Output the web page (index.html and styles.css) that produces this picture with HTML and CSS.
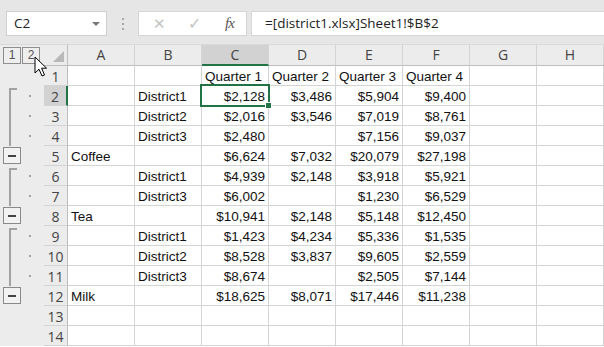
FILE: index.html
```html
<!DOCTYPE html>
<html lang="en">
<head>
  <meta charset="UTF-8" />
  <title>Outline - Excel</title>
  <link rel="stylesheet" href="styles.css">
</head>
<body>
  <div class="topbar">
    <div class="namebox">C2<span class="caret"></span></div>
    <div class="grip"><i></i><i></i><i></i></div>
    <div class="fbuttons">
      <span class="fb-x">&#x2715;</span>
      <span class="fb-ok">&#x2713;</span>
      <span class="fb-fx">fx</span>
    </div>
    <div class="formula">=[district1.xlsx]Sheet1!$B$2</div>
  </div>

  <div class="sheet">
    <div class="outline" id="outline">
      <div class="levels">
        <span class="lvl">1</span><span class="lvl">2</span>
      </div>
      <div class="ol-row"></div>
    </div>
    <div class="grid" id="grid"></div>
  </div>

  <svg class="cursor" width="14" height="22" viewBox="0 0 14 22">
    <path d="M1 1 L1 17 L5 13.2 L8 20 L10.5 19 L7.6 12.2 L12.6 12.2 Z" fill="#fff" stroke="#000" stroke-width="1" stroke-linejoin="round"/>
  </svg>

  <script>
    const cols = ["A", "B", "C", "D", "E", "F", "G", "H"];
    const rows = [
      ["", "", "Quarter 1", "Quarter 2", "Quarter 3", "Quarter 4"],
      ["", "District1", "$2,128", "$3,486", "$5,904", "$9,400"],
      ["", "District2", "$2,016", "$3,546", "$7,019", "$8,761"],
      ["", "District3", "$2,480", "", "$7,156", "$9,037"],
      ["Coffee", "", "$6,624", "$7,032", "$20,079", "$27,198"],
      ["", "District1", "$4,939", "$2,148", "$3,918", "$5,921"],
      ["", "District3", "$6,002", "", "$1,230", "$6,529"],
      ["Tea", "", "$10,941", "$2,148", "$5,148", "$12,450"],
      ["", "District1", "$1,423", "$4,234", "$5,336", "$1,535"],
      ["", "District2", "$8,528", "$3,837", "$9,605", "$2,559"],
      ["", "District3", "$8,674", "", "$2,505", "$7,144"],
      ["Milk", "", "$18,625", "$8,071", "$17,446", "$11,238"],
      [],
      []
    ];
    // detail rows per group, each group closed by a summary row with a minus button
    const groups = [3, 2, 3];

    const grid = document.getElementById("grid");
    const outline = document.getElementById("outline");

    function cell(cls, text) {
      const el = document.createElement("div");
      el.className = cls;
      el.textContent = text || "";
      grid.appendChild(el);
      return el;
    }

    cell("corner");
    cols.forEach(c => cell(c === "C" ? "colhead sel" : "colhead", c));

    rows.forEach((row, r) => {
      cell(r === 1 ? "rowhead sel" : "rowhead", r + 1);
      cols.forEach((c, i) => {
        const v = row[i] || "";
        const num = v.startsWith("$");
        const el = cell(num ? "c num" : "c", v);
        if (r === 1 && c === "C") el.classList.add("active");
      });
    });

    groups.forEach(n => {
      const g = document.createElement("div");
      g.className = "group";
      const br = document.createElement("div");
      br.className = "bracket";
      const dots = document.createElement("div");
      dots.className = "dots";
      for (let i = 0; i < n; i++) {
        const d = document.createElement("div");
        d.className = "dot-row";
        d.innerHTML = "<i></i>";
        dots.appendChild(d);
      }
      g.appendChild(br);
      g.appendChild(dots);
      outline.appendChild(g);
      const m = document.createElement("div");
      m.className = "ol-row";
      m.innerHTML = '<span class="minus"><i></i></span>';
      outline.appendChild(m);
    });
  </script>
</body>
</html>
```

FILE: styles.css
```css
body, html {
  margin: 0;
  padding: 0;
  width: 604px;
  height: 347px;
  overflow: hidden;
  background: #fff;
  font-family: "Liberation Sans", Arial, sans-serif;
}
.topbar {
  height: 45px;
  box-sizing: border-box;
  background: #e6e6e6;
  display: flex;
  align-items: flex-start;
  padding-top: 11px;
  border-bottom: 1px solid #d9d9d9;
}
.namebox {
  width: 101px;
  height: 25px;
  box-sizing: border-box;
  margin-left: 6px;
  background: #fff;
  border: 1px solid #cfcfcf;
  font-family: "Open Sans", sans-serif;
  font-size: 13.5px;
  color: #222;
  line-height: 23px;
  padding-left: 7px;
  position: relative;
}
.caret {
  position: absolute;
  right: 6px;
  top: 10px;
  border-left: 4px solid transparent;
  border-right: 4px solid transparent;
  border-top: 4px solid #777;
}
.grip {
  width: 31px;
  height: 25px;
  display: flex;
  flex-direction: column;
  align-items: center;
  justify-content: center;
  gap: 3px;
}
.grip i {
  width: 2px;
  height: 2px;
  background: #a8a8a8;
}
.fbuttons {
  width: 109px;
  height: 25px;
  box-sizing: border-box;
  background: #fff;
  border: 1px solid #d6d6d6;
  display: flex;
  align-items: center;
  color: #c4c4c4;
  font-size: 15px;
}
.fb-x { margin-left: 14px; }
.fb-ok { margin-left: 22px; font-size: 16px; }
.fb-fx {
  margin-left: 24px;
  font-family: "Liberation Serif", serif;
  font-style: italic;
  color: #555;
  font-size: 15px;
  letter-spacing: -1px;
}
.formula {
  flex: 1;
  height: 25px;
  box-sizing: border-box;
  margin-left: 4px;
  background: #fff;
  border: 1px solid #d6d6d6;
  border-right: none;
  padding-left: 13px;
  font-family: "Open Sans", sans-serif;
  font-size: 13.5px;
  line-height: 23px;
  color: #222;
}
.sheet {
  display: flex;
}
.outline {
  width: 44px;
  background: #ececec;
  display: flex;
  flex-direction: column;
}
.levels {
  height: 21px;
  display: flex;
  padding: 2px 0 0 3px;
  box-sizing: border-box;
}
.lvl {
  width: 18px;
  height: 17px;
  box-sizing: border-box;
  border: 1px solid #8e8e8e;
  margin-right: 1px;
  font-size: 12px;
  color: #555;
  text-align: center;
  line-height: 15px;
  background: #eeeeee;
}
.ol-row {
  height: 20px;
}
.group {
  display: flex;
}
.bracket {
  margin: 2px 0 0 9px;
  width: 6px;
  border-left: 2px solid #a2a2a2;
  border-top: 2px solid #a2a2a2;
}
.dots {
  margin-left: 12px;
}
.dot-row {
  height: 20px;
  display: flex;
  align-items: center;
}
.dot-row i {
  width: 2px;
  height: 2px;
  background: #a0a0a0;
}
.minus {
  display: flex;
  align-items: center;
  justify-content: center;
  width: 18px;
  height: 17px;
  box-sizing: border-box;
  margin: 1px 0 0 3px;
  border: 1px solid #8a8a8a;
  background: #f2f2f2;
}
.minus i {
  width: 8px;
  height: 2px;
  background: #444;
}
.grid {
  display: grid;
  grid-template-columns: 24px repeat(8, 67px);
  grid-template-rows: 21px;
  grid-auto-rows: 20px;
}
.grid > div {
  box-sizing: border-box;
  border-right: 1px solid #d4d4d4;
  border-bottom: 1px solid #d4d4d4;
  white-space: nowrap;
  overflow: visible;
}
.corner, .colhead, .rowhead {
  background: #ececec;
  font-family: "Open Sans", sans-serif;
  color: #444;
  font-size: 14px;
}
.corner {
  position: relative;
  border-bottom-color: #bdbdbd !important;
  border-right-color: #bdbdbd !important;
}
.corner::after {
  content: "";
  position: absolute;
  right: 3px;
  bottom: 3px;
  border-left: 11px solid transparent;
  border-bottom: 11px solid #b8b8b8;
}
.colhead {
  text-align: center;
  line-height: 20px;
  border-bottom-color: #bdbdbd !important;
}
.rowhead {
  text-align: center;
  line-height: 21px;
  border-right-color: #bdbdbd !important;
}
.colhead.sel {
  background: #d2d2d2;
  border-bottom: 2px solid #217346 !important;
  line-height: 19px;
}
.rowhead.sel {
  background: #d2d2d2;
  border-right: 2px solid #217346 !important;
}
.c {
  font-size: 13.5px;
  color: #111;
  line-height: 21px;
  padding: 0 3px;
}
.num {
  text-align: right;
}
.active {
  position: relative;
}
.active::before {
  content: "";
  position: absolute;
  left: -2px;
  top: -2px;
  right: -2px;
  bottom: -2px;
  border: 2px solid #217346;
}
.active::after {
  content: "";
  position: absolute;
  right: -4px;
  bottom: -4px;
  width: 5px;
  height: 5px;
  background: #217346;
  border: 1px solid #fff;
}
.cursor {
  position: absolute;
  left: 34px;
  top: 56px;
}
```
